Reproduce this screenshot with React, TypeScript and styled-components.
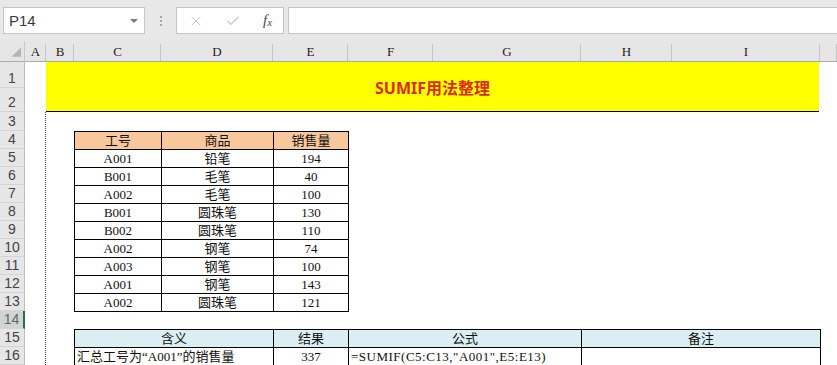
import React from 'react';
import styled, { createGlobalStyle } from 'styled-components';
import { X, Check } from 'lucide-react';

const GlobalStyle = createGlobalStyle`
  html, body {
    margin: 0;
    padding: 0;
    background: #fff;
    overflow: hidden;
  }
  * { box-sizing: border-box; }
`;

// column widths A..I, then a partial J
const COL_WIDTHS = [21, 28, 87, 112, 75, 85, 148, 91, 148];
const COL_LETTERS = ['A', 'B', 'C', 'D', 'E', 'F', 'G', 'H', 'I', ''];
// row heights 1..16
const ROW_HEIGHTS = [26, 24, 19, ...Array(13).fill(18)];

const CELL_FONT = `"Liberation Serif", "Noto Sans CJK SC", serif`;

const sales = [
  ['A001', '铅笔', '194'],
  ['B001', '毛笔', '40'],
  ['A002', '毛笔', '100'],
  ['B001', '圆珠笔', '130'],
  ['B002', '圆珠笔', '110'],
  ['A002', '钢笔', '74'],
  ['A003', '钢笔', '100'],
  ['A001', '钢笔', '143'],
  ['A002', '圆珠笔', '121'],
];

export default function App() {
  return (
    <>
      <GlobalStyle />
      <Window>
        <Toolbar>
          <NameBox>
            <span>P14</span>
            <DropArrow />
          </NameBox>
          <Grip>
            <i /><i /><i />
          </Grip>
          <FxBox>
            <X size={16} strokeWidth={1.3} color="#c4c4c4" />
            <Check size={16} strokeWidth={1.6} color="#c4c4c4" />
            <FxLabel>f<sub>x</sub></FxLabel>
          </FxBox>
          <FormulaInput />
        </Toolbar>

        <Sheet>
          <Corner>
            <svg width="25" height="21" viewBox="0 0 25 21">
              <polygon points="22,6 22,16 12,16" fill="#b5b5b5" />
            </svg>
          </Corner>
          {COL_LETTERS.map((l, i) => (
            <ColHeader key={i} style={{ gridColumn: i + 2 }}>{l}</ColHeader>
          ))}
          {ROW_HEIGHTS.map((_, i) => (
            <RowHeader key={i} $active={i + 1 === 14} style={{ gridRow: i + 2 }}>
              {i + 1}
            </RowHeader>
          ))}

          <PageBreak />

          <TitleBand>SUMIF用法整理</TitleBand>

          <SalesTable>
            <Cell $bg="#f8c89c">工号</Cell>
            <Cell $bg="#f8c89c">商品</Cell>
            <Cell $bg="#f8c89c">销售量</Cell>
            {sales.map((r, i) => (
              <React.Fragment key={i}>
                <Cell>{r[0]}</Cell>
                <Cell>{r[1]}</Cell>
                <Cell>{r[2]}</Cell>
              </React.Fragment>
            ))}
          </SalesTable>

          <NotesTable>
            <Cell $bg="#daeef3">含义</Cell>
            <Cell $bg="#daeef3">结果</Cell>
            <Cell $bg="#daeef3">公式</Cell>
            <Cell $bg="#daeef3">备注</Cell>
            <Cell $left>汇总工号为“A001”的销售量</Cell>
            <Cell>337</Cell>
            <Cell $left $wide>=SUMIF(C5:C13,"A001",E5:E13)</Cell>
            <Cell />
          </NotesTable>
        </Sheet>
      </Window>
    </>
  );
}

const Window = styled.div`
  width: 837px;
  height: 365px;
  overflow: hidden;
  background: #fff;
`;

const Toolbar = styled.div`
  height: 41px;
  display: flex;
  align-items: flex-start;
  padding: 7px 0 0 3px;
  background: #e8e8e8;
`;

const NameBox = styled.div`
  width: 142px;
  height: 27px;
  background: #fff;
  border: 1px solid #c6c6c6;
  display: flex;
  align-items: center;
  justify-content: space-between;
  padding: 0 6px 0 5px;
  font-family: "Liberation Sans", Arial, sans-serif;
  font-size: 15px;
  color: #3a3a3a;
`;

const DropArrow = styled.span`
  width: 0;
  height: 0;
  border-left: 4px solid transparent;
  border-right: 4px solid transparent;
  border-top: 4px solid #7a7a7a;
`;

const Grip = styled.div`
  width: 31px;
  height: 27px;
  display: flex;
  flex-direction: column;
  align-items: center;
  justify-content: center;
  gap: 2px;

  i {
    width: 2px;
    height: 2px;
    background: #a8a8a8;
  }
`;

const FxBox = styled.div`
  width: 108px;
  height: 27px;
  background: #fff;
  border: 1px solid #c6c6c6;
  display: flex;
  align-items: center;
  justify-content: space-around;
`;

const FxLabel = styled.span`
  font-family: "Liberation Serif", serif;
  font-style: italic;
  font-size: 15px;
  color: #4a4a4a;
  line-height: 1;

  sub {
    font-size: 11px;
    vertical-align: -1px;
  }
`;

const FormulaInput = styled.div`
  flex: 1;
  height: 27px;
  margin-left: 4px;
  background: #fff;
  border: 1px solid #c6c6c6;
  border-right: none;
`;

const Sheet = styled.div`
  display: grid;
  grid-template-columns: 25px ${COL_WIDTHS.map(w => `${w}px`).join(' ')} 1fr;
  grid-template-rows: 21px ${ROW_HEIGHTS.map(h => `${h}px`).join(' ')};
`;

const Corner = styled.div`
  grid-row: 1;
  grid-column: 1;
  background: #e6e6e6;
  border-bottom: 1px solid #ababab;
  border-right: 1px solid #c8c8c8;
  display: flex;
`;

const ColHeader = styled.div`
  grid-row: 1;
  position: relative;
  background: #e6e6e6;
  border-bottom: 1px solid #ababab;
  display: flex;
  align-items: flex-end;
  justify-content: center;
  padding-bottom: 1px;
  font-family: "Liberation Serif", serif;
  font-size: 13px;
  line-height: 17px;
  color: #222;

  &::after {
    content: '';
    position: absolute;
    right: 0;
    top: 3px;
    bottom: 0;
    width: 1px;
    background: #c6c6c6;
  }
`;

const RowHeader = styled.div<{ $active?: boolean }>`
  grid-column: 1;
  background: ${p => (p.$active ? '#d3d3d3' : '#e6e6e6')};
  border-bottom: 1px solid #d4d4d4;
  border-right: ${p => (p.$active ? '2px solid #217346' : '1px solid #bdbdbd')};
  display: flex;
  align-items: flex-end;
  justify-content: center;
  font-family: "Liberation Sans", Arial, sans-serif;
  font-size: 14px;
  line-height: 17px;
  color: ${p => (p.$active ? '#4d7260' : '#444')};
`;

const PageBreak = styled.div`
  grid-column: 2;
  grid-row: 4 / 18;
  border-right: 1px dotted #4a4a4a;
`;

const TitleBand = styled.div`
  grid-column: 3 / 11;
  grid-row: 2 / 4;
  margin-right: 1px;
  background: #ffff00;
  border-bottom: 1px solid #000;
  display: flex;
  align-items: center;
  justify-content: center;
  font-family: "Noto Sans", "Noto Sans CJK SC", sans-serif;
  font-weight: 700;
  font-size: 16px;
  color: #d92c1a;
`;

const DataGrid = styled.div`
  display: grid;
  grid-auto-rows: 17px;
  gap: 1px;
  background: #000;
  border: 1px solid #000;
  align-self: start;
  width: max-content;
`;

const SalesTable = styled(DataGrid)`
  grid-column: 4 / 7;
  grid-row: 5 / 15;
  grid-template-columns: 86px 111px 74px;
`;

const NotesTable = styled(DataGrid)`
  grid-column: 4 / 11;
  grid-row: 16 / 18;
  grid-template-columns: 198px 74px 232px 238px;
`;

const Cell = styled.div<{ $bg?: string; $left?: boolean; $wide?: boolean }>`
  background: ${p => p.$bg || '#fff'};
  text-align: ${p => (p.$left ? 'left' : 'center')};
  padding: 0 2px;
  font-family: ${CELL_FONT};
  font-size: 13px;
  line-height: 17px;
  letter-spacing: ${p => (p.$wide ? '0.5px' : 'normal')};
  color: #111;
  white-space: nowrap;
  overflow: hidden;
`;
